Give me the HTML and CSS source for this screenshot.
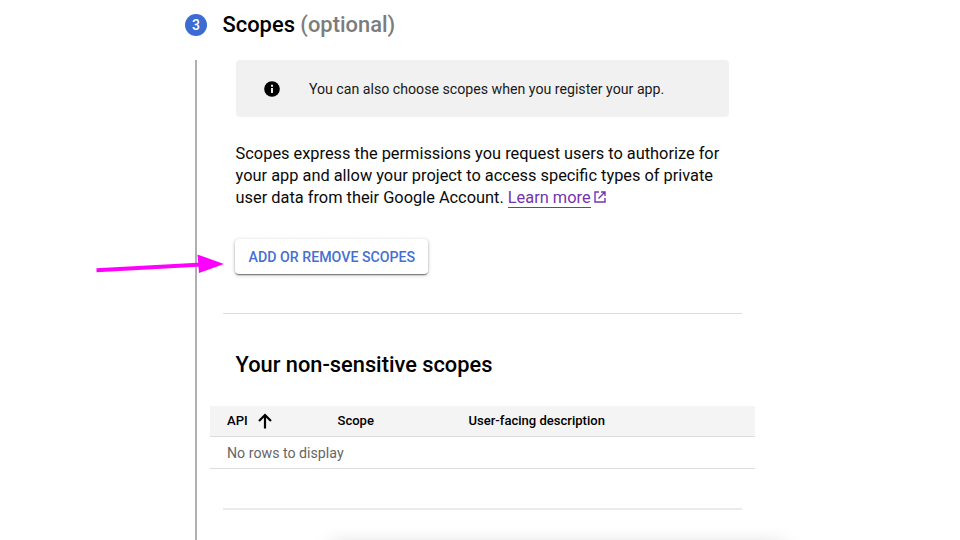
FILE: index.html
```html
<!DOCTYPE html>
<html lang="en">
<head>
<meta charset="utf-8">
<title>Scopes</title>
<link rel="stylesheet" href="styles.css">
</head>
<body>
<main class="step">
  <header class="step-header">
    <span class="step-number">3</span>
    <h1><span class="title">Scopes</span> <span class="optional">(optional)</span></h1>
  </header>
  <section class="step-body">
    <div class="notice">
      <svg class="info" viewBox="0 0 16 16"><circle cx="8" cy="8" r="7.8"/><path d="M8 7v5M8 3.8v2" stroke="#f1f1f1" stroke-width="2"/></svg>
      <span class="notice-text">You can also choose scopes when you register your app.</span>
    </div>
    <p class="intro"><span>Scopes express the permissions you request users to authorize for</span><br><span>your app and allow your project to access specific types of private</span><br><span>user data from their Google Account.</span> <a href="#">Learn more</a><svg class="external" viewBox="0 0 12 12"><path d="M5 1H1v10h10V7M7 1h4v4M11 1L4.500 7.500"/></svg></p>
    <button class="scopes-button"><span>ADD OR REMOVE SCOPES</span></button>
    <hr class="rule">
    <h2><span>Your non-sensitive scopes</span></h2>
    <div class="table">
      <div class="row head">
        <span class="api">API <svg viewBox="0 0 14 16"><path d="M7 15.500V2M1 8l6-6 6 6"/></svg></span>
        <span>Scope</span>
        <span>User-facing description</span>
      </div>
      <div class="row empty">No rows to display</div>
    </div>
    <hr class="rule last">
  </section>
</main>
<svg class="arrow" viewBox="0 0 140 30"><path d="M6.500 17.300L112 11.600" stroke="#f0f" stroke-width="4"/><path d="M107.500 1.500l26.500 9.500-25 9z" fill="#f0f"/></svg>
<div class="bottom-shadow"></div>
</body>
</html>
```
FILE: styles.css
```css
* { box-sizing: border-box; }
body { margin: 0; width: 960px; height: 540px; overflow: hidden; position: relative; background: #fff; color: #0a0a0a; font-family: Roboto, sans-serif; }
.step { width: 570px; margin-left: 185px; }
.step-header { height: 60px; display: flex; gap: 15px; padding-top: 14px; align-items: flex-start; }
.step-number { width: 22px; height: 22px; border-radius: 50%; background: #3c6bd1; color: #fff; font-size: 14px; font-weight: 500; line-height: 22px; text-align: center; }
h1 { margin: -3px 0 0 0.5px; font-size: 21.9px; line-height: 28px; font-weight: 500; white-space: nowrap; color: #000; }
.optional { color: #7c7c7c; }
.step-body { height: 480px; margin-left: 10px; border-left: 2px solid #b0b0b0; padding-left: 12.6px; }
.notice { width: 493px; height: 57px; margin-left: 26px; background: #f1f1f1; border-radius: 4px; display: flex; align-items: center; padding-left: 28.8px; gap: 28.5px; font-size: 14.17px; color: #1a1a1a; }
.info { width: 16px; height: 16px; fill: #000; }
.intro { margin: 26px 0 0 26px; font-size: 16.36px; line-height: 22px; white-space: nowrap; }
a { color: #7434ae; text-decoration: none; border-bottom: 1px solid; }
.external { width: 12px; height: 12px; margin-left: 3.5px; fill: none; stroke: #7434ae; stroke-width: 1.4; }
.scopes-button { display: block; width: 193px; height: 35px; margin: 30px 0 0 25.8px; padding: 0; border: 0; border-radius: 4px; background: #fff; box-shadow: 0 2px 1px -1px #0005, 0 1px 2px #0004, 0 1px 4px #0003; color: #466fd2; font: 500 14.2px Roboto, sans-serif; white-space: nowrap; }
.rule { width: 519px; height: 1px; border: 0; background: #ddd; margin: 39px 0 0 13px; }
h2 { margin: 36px 0 0 26px; font-size: 21.8px; line-height: 29px; font-weight: 500; color: #000; }
.table { width: 545px; margin-top: 27px; font-size: 13.05px; }
.row { height: 32px; border-bottom: 1px solid #ddd; display: flex; align-items: center; padding-left: 17.4px; }
.head { height: 31px; display: grid; grid-template-columns: 110.5px 131px 1fr; background: #f4f4f4; font-weight: 500; padding-bottom: 1px; color: #000; }
.api { display: flex; align-items: center; gap: 10.6px; }
.api svg { width: 14px; height: 16px; fill: none; stroke: #000; stroke-width: 2.2; }
.empty { color: #666; font-size: 14.2px; }
.last { height: 2px; background: #ebebeb; margin-top: 39px; }
.arrow { position: absolute; left: 90px; top: 253px; width: 140px; height: 30px; }
.bottom-shadow { position: absolute; left: 330px; top: 546px; width: 455px; height: 20px; box-shadow: 0 0 20px #0003; }
```
